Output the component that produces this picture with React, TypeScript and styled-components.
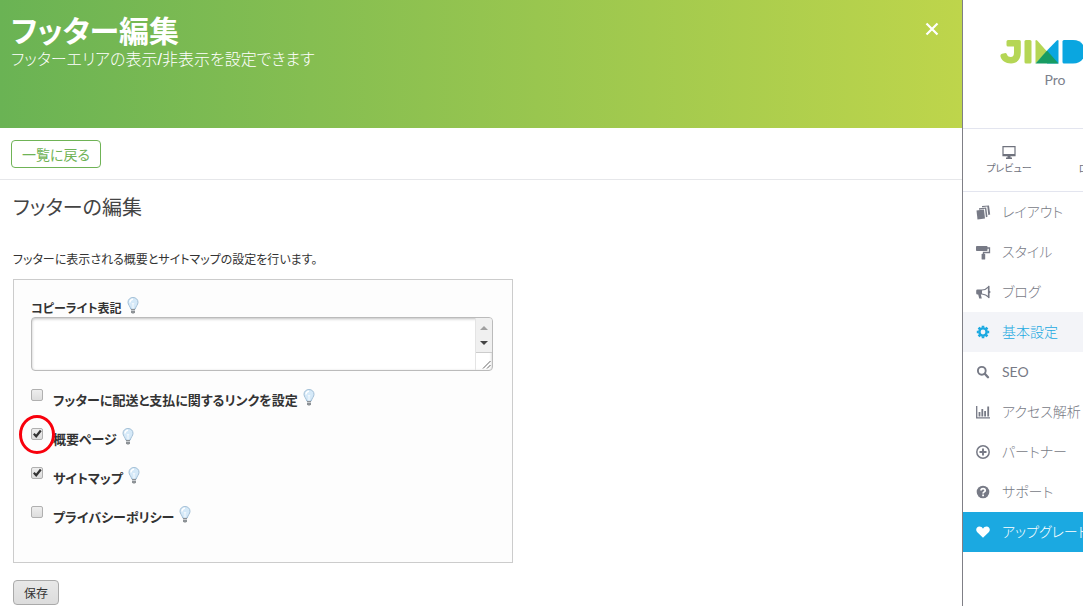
import React, { useState } from "react";
import styled, { createGlobalStyle, css } from "styled-components";

const GlobalStyle = createGlobalStyle`
  *, *::before, *::after { box-sizing: border-box; }
  body {
    margin: 0;
    background: #fff;
    color: #333;
    font-family: "Noto Sans CJK JP", "Noto Sans", sans-serif;
    font-size: 13px;
    font-feature-settings: "palt";
  }
  button, textarea, input { font: inherit; font-feature-settings: inherit; }
`;

const Page = styled.div`
  display: grid;
  grid-template-columns: minmax(0, 1fr) 121px;
  min-height: 100vh;
`;

const Main = styled.main`
  min-width: 0;
`;

const Header = styled.header`
  display: flex;
  justify-content: space-between;
  align-items: flex-start;
  min-height: 128px;
  padding: 10px 23px 0 11px;
  color: #fff;
  background: linear-gradient(90deg, #6ab354 0%, #bed54b 100%);
`;

const Title = styled.h1`
  margin: 0;
  font-size: 30px;
  line-height: 38px;
  font-weight: 700;
`;

const Subtitle = styled.p`
  margin: 0;
  font-family: "Liberation Sans", "Noto Sans CJK JP", sans-serif;
  font-size: 16px;
  line-height: 24px;
  font-weight: 300;
`;

const CloseButton = styled.button`
  display: flex;
  margin-top: 12px;
  padding: 0;
  border: 0;
  color: #fff;
  background: none;
  cursor: pointer;
`;

const ActionBar = styled.div`
  display: flex;
  padding: 12px 11px 11px;
  border-bottom: 1px solid #e6e7ea;
`;

const BackButton = styled.button`
  height: 28px;
  padding: 0 10px;
  border: 1px solid #6fb356;
  border-radius: 4px;
  color: #6fb356;
  background: #fff;
  font-size: 14px;
  line-height: 24px;
  cursor: pointer;
`;

const Content = styled.div`
  padding: 13px 13px 1px;
`;

const Heading = styled.h2`
  margin: 0 0 28px;
  font-size: 20px;
  line-height: 28px;
  font-weight: 400;
  color: #444;
`;

const Description = styled.p`
  margin: 0 0 10px;
  font-size: 12px;
  line-height: 20px;
`;

const Panel = styled.div`
  max-width: 500px;
  padding: 16px 19px 33px 17px;
  border: 1px solid #ccc;
  background: #fdfdfd;
`;

const FieldRow = styled.div`
  display: flex;
  align-items: flex-start;
  height: 24px;
`;

const Label = styled.label<{ $small?: boolean }>`
  font-size: ${(p) => (p.$small ? 12 : 13)}px;
  line-height: 24px;
  font-weight: 700;
  white-space: nowrap;
`;

const BulbIcon = styled.svg`
  flex: none;
  margin: 1px 0 0 5px;
`;

const TextBox = styled.div`
  display: flex;
  height: 54px;
  margin: -3px 0 17px;
  overflow: hidden;
  border: 1px solid #bbb;
  border-radius: 4px;
  background: #fff;
  box-shadow: inset 0 1px 3px rgba(0, 0, 0, 0.25);
`;

const TextArea = styled.textarea`
  flex: 1;
  min-width: 0;
  padding: 5px;
  border: 0;
  outline: 0;
  resize: none;
  overflow: hidden;
  background: transparent;
`;

const ScrollRail = styled.div`
  display: flex;
  flex-direction: column;
  width: 17px;
  border-left: 1px solid #e4e4e4;
`;

const Arrows = styled.div`
  flex: 1;
  display: flex;
  flex-direction: column;
  align-items: center;
  justify-content: space-around;
  padding: 2px 0;
  background: #f0f0f0;
  border-bottom: 1px solid #ccc;
`;

const Grip = styled.div`
  display: flex;
  height: 17px;
  align-items: flex-end;
  justify-content: flex-end;
  padding: 1px;
`;

const CheckList = styled.div`
  display: flex;
  flex-direction: column;
  gap: 15px;
`;

const CheckHolder = styled.span`
  position: relative;
  flex: none;
  width: 12px;
  height: 12px;
  margin: 1px 10px 0 0;
`;

const CheckInput = styled.input`
  display: block;
  appearance: none;
  width: 12px;
  height: 12px;
  margin: 0;
  border: 1px solid #b0b0b0;
  border-radius: 2px;
  background: linear-gradient(#eee, #ddd);
`;

const Tick = styled.svg`
  position: absolute;
  left: 1px;
  top: 0;
  pointer-events: none;
`;

const Highlight = styled.span`
  position: absolute;
  inset: -13px -12px -14px;
  border: 3px solid #f8000c;
  border-radius: 50%;
  pointer-events: none;
`;

const SaveButton = styled.button`
  display: block;
  height: 25px;
  margin-top: 17px;
  padding: 0 10px;
  border: 1px solid #aaa;
  border-radius: 4px;
  color: #333;
  background: linear-gradient(#e8e8e8, #dcdcdc);
  font-size: 12px;
  line-height: 20px;
`;

const Sidebar = styled.aside`
  overflow: hidden;
  border-left: 1px solid #7f7f86;
  background: #fff;
`;

const SidebarInner = styled.div`
  width: 184px;
`;

const Brand = styled.div`
  display: flex;
  flex-direction: column;
  align-items: center;
  height: 129px;
  padding-top: 39px;
  border-bottom: 1px solid #e3e5ef;
`;

const Plan = styled.span`
  margin-top: 6px;
  font-family: Lato, sans-serif;
  font-size: 14px;
  line-height: 20px;
  color: #7d818c;
`;

const Tools = styled.div`
  display: grid;
  grid-template-columns: 1fr 1fr;
  height: 63px;
  border-bottom: 1px solid #e3e5ef;
`;

const Tool = styled.button`
  display: flex;
  flex-direction: column;
  align-items: center;
  gap: 1px;
  padding: 17px 0 0;
  border: 0;
  background: none;
  color: #6f727d;
  font-size: 10px;
  line-height: 16px;
`;

const NavItem = styled.a<{ $tone?: "active" | "upgrade" }>`
  display: flex;
  align-items: center;
  gap: 11px;
  height: 40px;
  padding-left: 13px;
  color: #777a86;
  font-family: Lato, "Noto Sans CJK JP", sans-serif;
  font-size: 14px;
  line-height: 20px;
  text-decoration: none;
  white-space: nowrap;
  ${(p) => p.$tone === "active" && css`color: #1ba9e1; background: #f3f4f8;`}
  ${(p) => p.$tone === "upgrade" && css`color: #fff; background: #1ba9e1;`}
`;

const NavLabel = styled.span`
  font-weight: 300;
`;

const Latin = styled.span`
  font-weight: 400;
`;

const Bulb = () => (
  <BulbIcon width="12" height="17" viewBox="0 0 12 17" aria-hidden="true">
    <path d="M6 .5C3 .5 1 2.6 1 5.3c0 2.6 2.2 3.8 2.7 6.700h4.600C8.800 9.100 11 7.900 11 5.300 11 2.600 9 .5 6 .5z" fill="#d5e9f8" stroke="#a3bfd6" />
    <path d="M3 5.500C3 3.500 4.200 2.300 6 2.300" fill="none" stroke="#fff" strokeWidth="1.500" />
    <path d="M5 6l1 1.500L7 6M6 7.500V12" fill="none" stroke="#fff" strokeWidth=".8" />
    <path d="M4 12h4v3.200L7 16.500H5L4 15.200z" fill="#8d9296" />
    <path d="M4 13.500h4" stroke="#d8dcdf" strokeWidth=".8" />
  </BulbIcon>
);

const Logo = () => (
  <svg width="110" height="25" viewBox="0 0 110 25" role="img" aria-label="Jimdo">
    <path d="M8 1H19.300Q20.800 1 20.800 2.500V13.500C20.800 20.500 16.800 24.500 11 24.500C5.500 24.500 1.500 21.500 .5 17.500Q0 15.300 2 14.800L4.500 14.200Q6.300 13.800 7 15.500C7.700 17.300 9 18 10.700 18C13 18 14 16.500 14 13.500V7.500H8Q6.500 7.500 6.500 6V2.500Q6.500 1 8 1z" fill="#b5d655" />
    <rect x="24.500" y="1" width="7" height="23.500" rx="1.500" fill="#b5d655" />
    <path d="M35.500 2.200Q35.500 0 37.200 1.600L47 12.500L35.500 24.500z" fill="#b5d655" />
    <path d="M58.500 2.200Q58.500 0 56.800 1.600L47 11.500V24.500H58.500z" fill="#0aa6e0" />
    <path d="M47 11.500L58.500 24.500H35.500z" fill="#179c62" />
    <path d="M64 1H73C80.500 1 85 6 85 12.750S80.500 24.500 73 24.500H64Q62.500 24.500 62.500 23V2.500Q62.500 1 64 1z" fill="#0aa6e0" />
    <circle cx="98" cy="12.750" r="8.500" fill="none" stroke="#0aa6e0" strokeWidth="6.500" />
  </svg>
);

const icons: Record<string, React.ReactNode> = {
  layout: (
    <>
      <path d="M.5 5.500L8 4.500L9 13.500L1.500 14.500z" />
      <path d="M3 4.700L3 3.200L10.200 2.500L11.500 11.800L9.900 12.200L9 3.700z" />
      <path d="M6 2.200V1L13 .5L14.200 9.500L12.300 10L11.300 1.600z" />
    </>
  ),
  style: (
    <>
      <rect x="0" y="1" width="11.500" height="5" rx=".8" />
      <path d="M11 3h2.500v4.500H7.500v2" fill="none" stroke="currentColor" strokeWidth="1.300" />
      <rect x="5.600" y="8.800" width="3.600" height="5.700" rx=".6" />
    </>
  ),
  blog: (
    <>
      <path d="M1.500 4.500H6v5H4.800l1 4H3.200L2.200 9.500H1.500Q.2 9.500.2 8.200V5.800Q.2 4.500 1.500 4.500z" />
      <path d="M6 5C8.500 4.800 11 3.500 12.500 1.800V12C11 10.500 8.500 9.300 6 9" fill="none" stroke="currentColor" strokeWidth="1.200" />
      <path d="M12 1h1.500v4.800q1 .4 1 1.200t-1 1.200V13H12z" />
    </>
  ),
  settings: (
    <>
      <circle cx="7" cy="7" r="3.600" fill="none" stroke="currentColor" strokeWidth="2.400" />
      <path d="M7 .8v2M7 11.200v2M.8 7h2M11.200 7h2M2.600 2.600L4 4M10 10l1.400 1.400M2.600 11.400L4 10M10 4l1.400-1.400" stroke="currentColor" strokeWidth="2.600" />
    </>
  ),
  search: (
    <>
      <circle cx="5.800" cy="5.800" r="3.900" fill="none" stroke="currentColor" strokeWidth="1.900" />
      <path d="M8.800 8.800l3.200 3.400" stroke="currentColor" strokeWidth="2.400" strokeLinecap="round" />
    </>
  ),
  stats: (
    <>
      <path d="M.7 1v11.800H14" fill="none" stroke="currentColor" strokeWidth="1.300" />
      <path d="M3.500 7v4.500M6.300 4v7.500M9.100 6v5.500M12.200 1.500v10" stroke="currentColor" strokeWidth="1.800" />
    </>
  ),
  partner: (
    <>
      <circle cx="7" cy="7" r="6.200" fill="none" stroke="currentColor" strokeWidth="1.500" />
      <path d="M7 3.500v7M3.500 7h7" stroke="currentColor" strokeWidth="1.900" />
    </>
  ),
  support: (
    <>
      <circle cx="7" cy="7" r="6.300" />
      <path d="M5 5.400C5 3 9.200 3 9.200 5.400C9.200 7 7.100 6.800 7.100 8.400" fill="none" stroke="#fff" strokeWidth="1.700" />
      <path d="M6.200 9.500H8v1.700H6.200z" fill="#fff" />
    </>
  ),
  upgrade: <path d="M7 12.700L1.300 7.300C-1 4.800.6 1.600 3.400 1.600C5 1.600 6.300 2.500 7 3.800C7.700 2.500 9 1.600 10.600 1.600C13.400 1.600 15 4.800 12.700 7.300z" />,
};

const Icon = ({ name }: { name: string }) => (
  <svg width="15" height="15" viewBox="0 0 15 15" fill="currentColor" aria-hidden="true">{icons[name]}</svg>
);

const navItems: { icon: string; label: React.ReactNode; tone?: "active" | "upgrade" }[] = [
  { icon: "layout", label: "レイアウト" },
  { icon: "style", label: "スタイル" },
  { icon: "blog", label: "ブログ" },
  { icon: "settings", label: "基本設定", tone: "active" },
  { icon: "search", label: <Latin>SEO</Latin> },
  { icon: "stats", label: "アクセス解析" },
  { icon: "partner", label: "パートナー" },
  { icon: "support", label: "サポート" },
  { icon: "upgrade", label: "アップグレード", tone: "upgrade" },
];

const options = [
  { id: "shipping", label: "フッターに配送と支払に関するリンクを設定", checked: false },
  { id: "overview", label: "概要ページ", checked: true, highlighted: true },
  { id: "sitemap", label: "サイトマップ", checked: true },
  { id: "privacy", label: "プライバシーポリシー", checked: false },
];

const CheckOption = ({ id, label, checked, highlighted }: { id: string; label: string; checked: boolean; highlighted?: boolean }) => {
  const [on, setOn] = useState(checked);
  return (
    <FieldRow>
      <CheckHolder>
        <CheckInput type="checkbox" id={id} checked={on} onChange={() => setOn(!on)} />
        {on && (
          <Tick width="11" height="11" viewBox="0 0 11 11">
            <path d="M1.800 5.800L4.200 8.300L8.800 2.500" fill="none" stroke="#333" strokeWidth="2.200" />
          </Tick>
        )}
        {highlighted && <Highlight />}
      </CheckHolder>
      <Label htmlFor={id}>{label}</Label>
      <Bulb />
    </FieldRow>
  );
};

export default function App() {
  return (
    <>
      <GlobalStyle />
      <Page>
        <Main>
          <Header>
            <div>
              <Title>フッター編集</Title>
              <Subtitle>フッターエリアの表示/非表示を設定できます</Subtitle>
            </div>
            <CloseButton aria-label="閉じる">
              <svg width="14" height="14" viewBox="0 0 14 14">
                <path d="M1.500 1.500l11 11M12.500 1.500l-11 11" stroke="currentColor" strokeWidth="2.200" />
              </svg>
            </CloseButton>
          </Header>
          <ActionBar>
            <BackButton>一覧に戻る</BackButton>
          </ActionBar>
          <Content>
            <Heading>フッターの編集</Heading>
            <Description>フッターに表示される概要とサイトマップの設定を行います。</Description>
            <Panel>
              <FieldRow>
                <Label $small htmlFor="copyright">コピーライト表記</Label>
                <Bulb />
              </FieldRow>
              <TextBox>
                <TextArea id="copyright" />
                <ScrollRail>
                  <Arrows>
                    <svg width="8" height="4" viewBox="0 0 8 4"><path d="M0 4L4 0l4 4z" fill="#a0a0a0" /></svg>
                    <svg width="8" height="4" viewBox="0 0 8 4"><path d="M0 0l4 4 4-4z" fill="#444" /></svg>
                  </Arrows>
                  <Grip>
                    <svg width="9" height="9" viewBox="0 0 9 9"><path d="M1 8.500L8.500 1M5 8.500L8.500 5" stroke="#666" fill="none" /></svg>
                  </Grip>
                </ScrollRail>
              </TextBox>
              <CheckList>
                {options.map((o) => <CheckOption key={o.id} {...o} />)}
              </CheckList>
            </Panel>
            <SaveButton>保存</SaveButton>
          </Content>
        </Main>
        <Sidebar>
          <SidebarInner>
            <Brand>
              <Logo />
              <Plan>Pro</Plan>
            </Brand>
            <Tools>
              <Tool>
                <svg width="14" height="13" viewBox="0 0 14 13">
                  <path d="M1 .7h12v9H1z" fill="none" stroke="currentColor" strokeWidth="1.200" />
                  <path d="M1 8h12v2H1zM5.500 10h3v1.500H10V13H4v-1.500h1.500z" fill="currentColor" />
                </svg>
                プレビュー
              </Tool>
              <Tool>
                <svg width="14" height="13" viewBox="0 0 14 13">
                  <path d="M6 1H1v11h5M5 6.500h8M10 3.500l3 3-3 3" fill="none" stroke="currentColor" strokeWidth="1.200" />
                </svg>
                ログアウト
              </Tool>
            </Tools>
            <nav>
              {navItems.map((n) => (
                <NavItem key={n.icon} href="#" $tone={n.tone}>
                  <Icon name={n.icon} />
                  <NavLabel>{n.label}</NavLabel>
                </NavItem>
              ))}
            </nav>
          </SidebarInner>
        </Sidebar>
      </Page>
    </>
  );
}
